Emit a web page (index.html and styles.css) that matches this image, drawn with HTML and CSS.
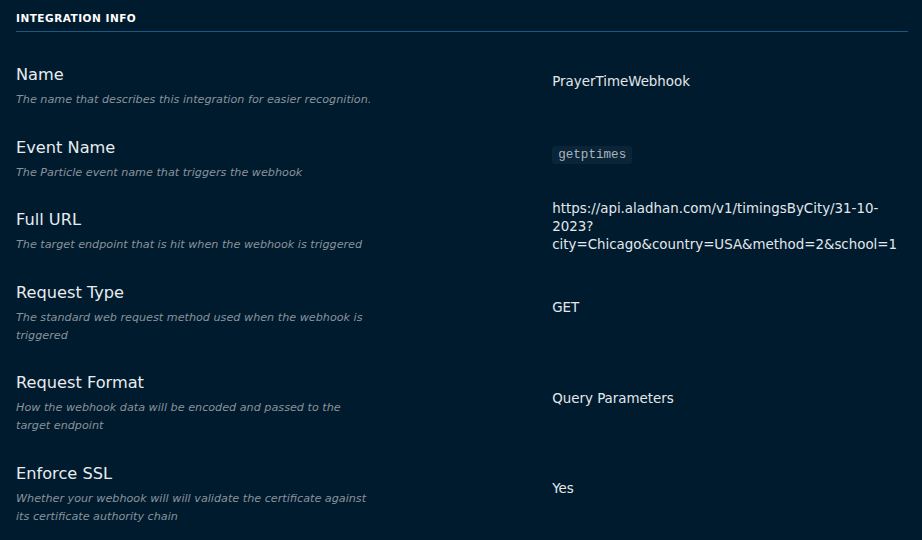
FILE: index.html
```html
<!DOCTYPE html>
<html lang="en">
<head>
<meta charset="utf-8">
<title>Integration Info</title>
<link rel="stylesheet" href="styles.css">
</head>
<body>
<section class="panel">
  <h2 class="section-title">INTEGRATION INFO</h2>
  <div class="rows">
    <div class="row">
      <div class="label">
        <div class="label-title">Name</div>
        <div class="label-desc">The name that describes this integration for easier recognition.</div>
      </div>
      <div class="value">PrayerTimeWebhook</div>
    </div>
    <div class="row">
      <div class="label">
        <div class="label-title">Event Name</div>
        <div class="label-desc">The Particle event name that triggers the webhook</div>
      </div>
      <div class="value"><code class="code">getptimes</code></div>
    </div>
    <div class="row">
      <div class="label">
        <div class="label-title">Full URL</div>
        <div class="label-desc">The target endpoint that is hit when the webhook is triggered</div>
      </div>
      <div class="value">https://api.aladhan.com/v1/timingsByCity/31-10-2023?city=Chicago&amp;country=USA&amp;method=2&amp;school=1</div>
    </div>
    <div class="row">
      <div class="label">
        <div class="label-title">Request Type</div>
        <div class="label-desc">The standard web request method used when the webhook is triggered</div>
      </div>
      <div class="value">GET</div>
    </div>
    <div class="row">
      <div class="label">
        <div class="label-title">Request Format</div>
        <div class="label-desc">How the webhook data will be encoded and passed to the target endpoint</div>
      </div>
      <div class="value">Query Parameters</div>
    </div>
    <div class="row">
      <div class="label">
        <div class="label-title">Enforce SSL</div>
        <div class="label-desc">Whether your webhook will will validate the certificate against its certificate authority chain</div>
      </div>
      <div class="value">Yes</div>
    </div>
  </div>
</section>
</body>
</html>
```
FILE: styles.css
```css
html, body {
  margin: 0;
  padding: 0;
  background: #001b2e;
}
body {
  font-family: "DejaVu Sans", "Open Sans", sans-serif;
  color: #e3e8ec;
  width: 922px;
  height: 540px;
  overflow: hidden;
}
.panel {
  padding: 11px 14px 0 16px;
}
.section-title {
  margin: 0;
  font-size: 10.5px;
  font-weight: 700;
  letter-spacing: 0.5px;
  line-height: 14px;
  color: #ffffff;
  padding-bottom: 6px;
  border-bottom: 1px solid #1a5884;
}
.rows {
  display: flex;
  flex-direction: column;
  padding-top: 22px;
}
.row {
  display: grid;
  grid-template-columns: 40% 40%;
  column-gap: 20%;
  align-items: center;
  padding-bottom: 17.5px;
}
.label {
  padding-top: 11px;
}
.label-title {
  font-size: 16.2px;
  line-height: 20px;
  color: #e8ecef;
  margin-bottom: 6px;
}
.label-desc {
  font-size: 11.2px;
  font-style: italic;
  line-height: 18px;
  color: #89929a;
}
.value {
  padding-left: 1px;
  font-size: 13.4px;
  line-height: 18px;
  color: #e3e8ec;
}
.code {
  display: inline-block;
  font-family: "Liberation Mono", "DejaVu Sans Mono", monospace;
  font-size: 12.6px;
  line-height: 18px;
  color: #aab4bd;
  background: #0a2438;
  padding: 0 6px;
  border-radius: 3px;
}
```
